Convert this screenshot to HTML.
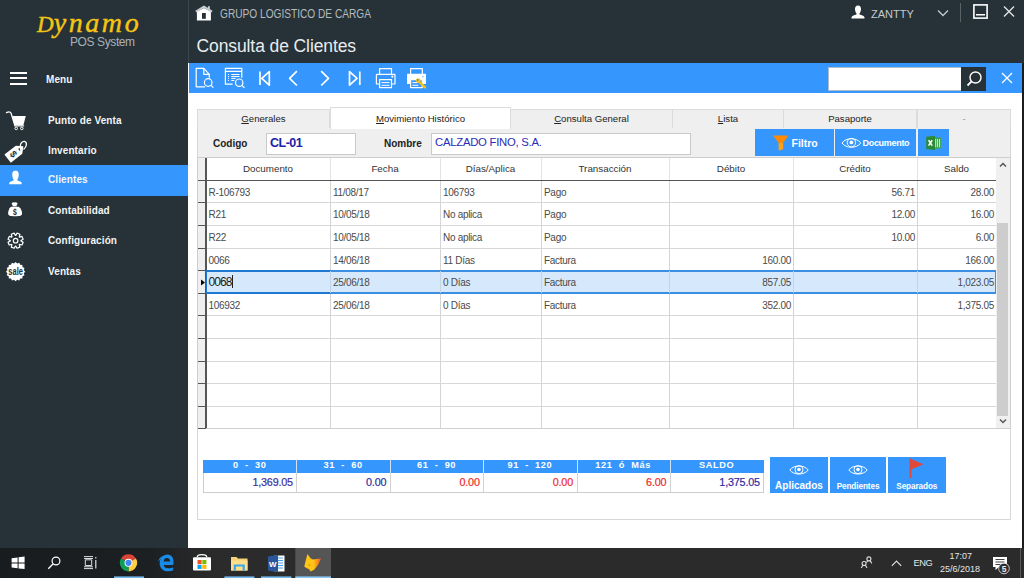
<!DOCTYPE html>
<html><head><meta charset="utf-8">
<style>
*{margin:0;padding:0;box-sizing:border-box}
html,body{width:1024px;height:578px;overflow:hidden;background:#fff;font-family:"Liberation Sans",sans-serif}
.a{position:absolute}
#side{left:0;top:0;width:188px;height:548px;background:#263238}
#hdr{left:188px;top:0;width:836px;height:63px;background:#263238;border-left:1px solid #3d464c}
#rb{left:1022px;top:0;width:2px;height:548px;background:linear-gradient(180deg,#263238 0,#263238 63px,#1a1d1f 63px)}
#tb{left:189px;top:63px;width:833px;height:30px;background:#3597fd}
.mi{color:#f2f4f5;font-weight:bold;font-size:10px;line-height:12px;left:48px;white-space:nowrap;letter-spacing:0.1px}
.t{white-space:nowrap}
#task{left:0;top:548px;width:1024px;height:30px;background:linear-gradient(90deg,#181c1f 0,#1c2023 150px,#2b2b2b 215px,#2b2b2b 100%)}
.tab{top:109px;height:20px;background:#efefef;border:1px solid #dcdcdc;border-bottom:none;font-size:9.6px;line-height:18px;text-align:center;color:#222;white-space:nowrap}
.act{top:107px;height:22px;background:#fff;line-height:21px;z-index:2}
.lbl{font-size:10px;font-weight:bold;color:#222;line-height:12px}
.btn{top:129px;height:27px;background:#3597fd}
.hd{font-size:9.8px;line-height:12px;text-align:center;color:#333;white-space:nowrap}
.cd{font-size:10px;line-height:12px;color:#4a4a4a;white-space:nowrap;margin-top:1.5px;letter-spacing:-0.3px}
.sh{top:459px;height:13px;font-size:9.2px;line-height:13px;font-weight:bold;color:#fff;text-align:center;letter-spacing:0.6px;white-space:nowrap;-webkit-text-stroke:0px}
.sv{top:475px;font-size:10.8px;line-height:14px;text-align:right;white-space:nowrap;-webkit-text-stroke:0.2px;letter-spacing:-0.2px}
</style></head><body>
<div class="a" id="side"></div>
<div class="a" id="hdr"></div>
<div class="a" id="rb"></div>
<div class="a" id="tb"></div>

<!-- logo -->
<svg class="a" style="left:0;top:0" width="188" height="60" viewBox="0 0 188 60"><text x="37" y="31.8" font-family="Liberation Serif" font-style="italic" fill="#f4c414" stroke="#f4c414" stroke-width="0.45"><tspan font-size="23">D</tspan><tspan font-size="28" letter-spacing="2.6">ynamo</tspan></text></svg>
<div class="a t" style="left:70px;top:35px;font-size:12px;color:#aab1b6;letter-spacing:-0.4px">POS System</div>

<!-- menu -->
<div class="a" style="left:10px;top:72px;width:17px;height:2px;background:#fff"></div>
<div class="a" style="left:10px;top:77px;width:17px;height:2px;background:#fff"></div>
<div class="a" style="left:10px;top:83px;width:17px;height:2px;background:#fff"></div>
<div class="a mi" style="left:46px;top:74px">Menu</div>

<div class="a" style="left:0;top:165px;width:188px;height:31px;background:#3597fd"></div>
<!-- sideicons -->
<svg class="a" style="left:0;top:100px" width="40" height="190" viewBox="0 100 40 190">
 <path d="M6.5 112.6 C8 111.8 10.2 111.6 11 113 L15 125.8 L23.6 125.8" stroke="#fff" stroke-width="1.3" fill="none" stroke-linecap="round"/>
 <path d="M12.2 116 L25.8 116 L23.4 125.3 L14.6 125.3Z" fill="#fff"/>
 <circle cx="16.2" cy="128.4" r="1.3" stroke="#fff" stroke-width="1" fill="none"/>
 <circle cx="21.8" cy="128.4" r="1.3" stroke="#fff" stroke-width="1" fill="none"/>
 <g transform="rotate(-38 15.5 152.5)">
  <path d="M5.5 147.3 L20 147.3 L25.5 152.5 L20 157.7 L5.5 157.7Z" fill="#fff"/>
  <circle cx="21" cy="152.5" r="1.3" fill="#263238"/>
  <text x="13" y="155.8" font-family="Liberation Sans" font-weight="bold" font-size="9.5" fill="#263238" text-anchor="middle" transform="rotate(90 13 152.5)">$</text>
 </g>
 <path d="M20.8 150.2 C18.8 145.5 21.5 141 24.3 141.3 C27.3 141.7 27.2 146.5 23.5 149.5" stroke="#fff" stroke-width="1.3" fill="none"/>
 <path d="M15.6 170.8 C18.3 170.8 18.9 172.8 18.7 175.5 C18.5 177.8 17.8 179 17.3 179.6 L17.4 180.6 C19.5 181.2 21.3 181.8 21.7 183 L21.7 184.2 L9.3 184.2 L9.3 183 C9.7 181.8 11.5 181.2 13.6 180.6 L13.7 179.6 C13.2 179 12.5 177.8 12.3 175.5 C12.1 172.8 12.7 170.8 15.6 170.8Z" fill="#fff"/>
 <path d="M11.6 203.4 Q12.8 201.9 14.6 202.4 Q16.4 201.9 17.6 203.4 L16.4 206.1 L12.8 206.1Z" fill="#fff"/>
 <path d="M10.6 207.1 C12 206.4 17.6 206.4 19 207.1 C21 208.5 22.1 211.4 22.1 213.5 C22.1 215.7 20.1 216.2 15.1 216.2 C10.1 216.2 8.1 215.7 8.1 213.5 C8.1 211.4 9.1 208.5 10.6 207.1Z" fill="#fff"/>
 <text x="14.9" y="215.2" font-family="Liberation Sans" font-weight="bold" font-size="8.6" fill="#263238" text-anchor="middle" transform="translate(14.9 0) scale(0.8 1) translate(-14.9 0)">$</text>
 <path d="M20.90 240.87 L23.16 242.17 L21.99 245.00 L19.47 244.32 L19.22 244.57 L19.90 247.09 L17.07 248.26 L15.77 246.00 L15.43 246.00 L14.13 248.26 L11.30 247.09 L11.98 244.57 L11.73 244.32 L9.21 245.00 L8.04 242.17 L10.30 240.87 L10.30 240.53 L8.04 239.23 L9.21 236.40 L11.73 237.08 L11.98 236.83 L11.30 234.31 L14.13 233.14 L15.43 235.40 L15.77 235.40 L17.07 233.14 L19.90 234.31 L19.22 236.83 L19.47 237.08 L21.99 236.40 L23.16 239.23 L20.90 240.53Z" stroke="#fff" stroke-width="1.2" fill="none" stroke-linejoin="round"/>
 <circle cx="15.6" cy="240.7" r="2.3" stroke="#fff" stroke-width="1.2" fill="none"/>
 <path d="M25.20 271.70 L23.74 273.32 L24.47 275.37 L22.50 276.31 L22.39 278.49 L20.21 278.60 L19.27 280.57 L17.22 279.84 L15.60 281.30 L13.98 279.84 L11.93 280.57 L10.99 278.60 L8.81 278.49 L8.70 276.31 L6.73 275.37 L7.46 273.32 L6.00 271.70 L7.46 270.08 L6.73 268.03 L8.70 267.09 L8.81 264.91 L10.99 264.80 L11.93 262.83 L13.98 263.56 L15.60 262.10 L17.22 263.56 L19.27 262.83 L20.21 264.80 L22.39 264.91 L22.50 267.09 L24.47 268.03 L23.74 270.08Z" fill="#fff"/>
 <text x="15.6" y="275.2" font-family="Liberation Sans" font-weight="bold" font-size="10" fill="#263238" text-anchor="middle" textLength="14.5" lengthAdjust="spacingAndGlyphs">sale</text>
</svg>
<!-- /sideicons -->
<div class="a mi" style="top:114.5px">Punto de Venta</div>
<div class="a mi" style="top:144.5px">Inventario</div>
<div class="a mi" style="top:174px">Clientes</div>
<div class="a mi" style="top:204.5px">Contabilidad</div>
<div class="a mi" style="top:235px">Configuración</div>
<div class="a mi" style="top:266px">Ventas</div>

<!-- header -->
<div class="a t" style="left:220px;top:7px;font-size:12px;color:#b4babe;transform:scaleX(0.845);transform-origin:0 0">GRUPO LOGISTICO DE CARGA</div>
<div class="a t" style="left:196.5px;top:36px;font-size:17.5px;color:#e9ecee;letter-spacing:-0.1px">Consulta de Clientes</div>
<div class="a t" style="left:871px;top:8px;font-size:11px;color:#c5cacd">ZANTTY</div>
<!-- house icon -->
<svg class="a" style="left:190px;top:2px" width="30" height="22" viewBox="190 2 30 22"><path d="M196.9 11.6 L203.9 8 L210.9 11.6 L210.9 20.6 L196.9 20.6Z" fill="#fff"/><path d="M195.8 11.6 L203.9 6.6 L212.1 11.6" stroke="#c9cdd0" stroke-width="1.9" fill="none"/><rect x="207.9" y="6.2" width="1.9" height="3.6" fill="#c9cdd0"/><rect x="202" y="13" width="3.8" height="5.8" fill="#263238"/></svg>
<!-- user icon -->
<svg class="a" style="left:851px;top:5px" width="14" height="14" viewBox="0 0 14 14"><path d="M7 0.5 C9.2 0.5 10.2 2.2 10 4.5 C9.8 6.8 8.8 8.2 8.4 8.6 L8.6 9.6 C10.5 10.1 13 10.8 13.5 12.2 L13.5 13.5 L0.5 13.5 L0.5 12.2 C1 10.8 3.5 10.1 5.4 9.6 L5.6 8.6 C5.2 8.2 4.2 6.8 4 4.5 C3.8 2.2 4.8 0.5 7 0.5Z" fill="#fff"/></svg>
<svg class="a" style="left:937px;top:9px" width="12" height="8" viewBox="0 0 12 8"><path d="M1 1.5 L6 6.5 L11 1.5" stroke="#c5cacd" stroke-width="1.3" fill="none"/></svg>
<div class="a" style="left:960px;top:3px;width:1px;height:19px;background:#59636a"></div>
<svg class="a" style="left:973px;top:4px" width="15" height="15" viewBox="0 0 15 15"><rect x="0.9" y="0.9" width="13.2" height="13.2" stroke="#fff" stroke-width="1.6" fill="none"/><rect x="3" y="10" width="9" height="1.5" fill="#fff"/></svg>
<svg class="a" style="left:1003px;top:6px" width="12" height="11" viewBox="0 0 12 11"><path d="M1 0.5 L11 10.5 M11 0.5 L1 10.5" stroke="#dfe3e5" stroke-width="1.4"/></svg>


<!-- toolbar icons -->
<svg class="a" style="left:189px;top:63px" width="250" height="30" viewBox="0 0 250 30" fill="none" stroke="#fff" stroke-width="1.2" stroke-linejoin="round">
 <path d="M16.2 23.8 L7.2 23.8 L7.2 5.4 L14.8 5.4 L20.3 11.3 L20.3 14.8 M14.8 5.4 L14.8 11.3 L20.3 11.3"/>
 <circle cx="19.2" cy="19.5" r="3.8"/><path d="M21.9 22.2 L24.3 24.6"/>
 <path d="M43.6 21.2 L36.4 21.2 L36.4 5.4 L52.8 5.4 L52.8 14.8 M36.4 8.3 L52.8 8.3"/>
 <path d="M39 11.5 h0.9 M39 13.5 h0.9 M39 15.4 h0.9 M39 17.5 h0.9 M42.3 11.5 h8.2 M42.3 13.5 h8.2 M42.3 15.4 h4.4 M42.3 17.5 h3" stroke-width="1"/>
 <circle cx="50.2" cy="19.7" r="3.7" fill="#3597fd"/><path d="M52.9 22.4 L55.4 24.8"/>
 <path d="M71 8.6 L71 22.1 M80.3 8.6 L72.8 15.35 L80.3 22.1 Z" stroke-width="1.7"/>
 <path d="M107.9 8.2 L100.6 15.35 L107.9 22.5" stroke-width="1.7"/>
 <path d="M132.2 8.2 L139.5 15.35 L132.2 22.5" stroke-width="1.7"/>
 <path d="M160.5 8.6 L168 15.35 L160.5 22.1 Z M170.8 8.6 L170.8 22.1" stroke-width="1.7"/>
 <path d="M190.6 11.3 L190.6 5.6 L202.5 5.6 L202.5 11.3"/>
 <path d="M190.4 21 L188 21 Q187.4 21 187.4 20.4 L187.4 12 Q187.4 11.4 188 11.4 L205.4 11.4 Q206 11.4 206 12 L206 20.4 Q206 21 205.4 21 L202.8 21"/>
 <rect x="190.6" y="16.6" width="11.9" height="8" fill="#3597fd"/>
 <path d="M192.5 19.6 h8 M192.5 22.3 h8" stroke-width="1"/>
 <circle cx="203.3" cy="13.6" r="0.5" fill="#fff"/>
 <path d="M221.6 11 L221.6 5.6 L233.3 5.6 L233.3 11"/>
 <rect x="218" y="10.8" width="19" height="10.2" rx="0.6" fill="#fff" stroke="none"/>
 <rect x="221.6" y="16.6" width="11.7" height="8" fill="#3597fd"/>
 <path d="M223.4 19.6 h6 M223.4 22.3 h6" stroke-width="1"/>
 <circle cx="234" cy="13.6" r="0.6" fill="#3597fd" stroke="none"/>
 <path d="M230 18.5 L236 24.3" stroke="#f2c21b" stroke-width="2.4" stroke-linecap="round"/>
 <circle cx="229.2" cy="17.6" r="2.4" fill="#f2c21b" stroke="none"/>
 <circle cx="228.7" cy="17" r="0.9" fill="#3597fd" stroke="none"/>
</svg>
<!-- search -->
<div class="a" style="left:828px;top:67px;width:134px;height:24px;background:#fff;border:1px solid #aebccb"></div>
<div class="a" style="left:961px;top:67px;width:25px;height:24px;background:#263238"></div>
<svg class="a" style="left:964px;top:69px" width="20" height="20" viewBox="0 0 20 20" fill="none" stroke="#fff" stroke-width="1.4"><circle cx="11.5" cy="8.5" r="5.5"/><path d="M7.6 12.4 L3.5 16.5" stroke-width="1.8"/></svg>
<svg class="a" style="left:1001px;top:72px" width="12" height="12" viewBox="0 0 12 12"><path d="M1 1 L11 11 M11 1 L1 11" stroke="#fff" stroke-width="1.3"/></svg>

<!-- outer panel -->
<div class="a" style="left:197px;top:109px;width:814px;height:411px;border:1px solid #d8d8d8;border-top:none"></div>
<!-- tabs -->
<div class="a tab" style="left:197px;width:133px"><u>G</u>enerales</div>
<div class="a tab act" style="left:330px;width:181px"><u>M</u>ovimiento Histórico</div>
<div class="a tab" style="left:510px;width:163px"><u>C</u>onsulta General</div>
<div class="a tab" style="left:672px;width:112px"><u>L</u>ista</div>
<div class="a tab" style="left:783px;width:134px">Pasaporte</div>
<div class="a tab" style="left:917px;width:94px;color:#999">-</div>
<!-- form row -->
<div class="a" style="left:197px;top:128px;width:814px;height:30px;background:#efefef;border-left:1px solid #d8d8d8;border-right:1px solid #d8d8d8"></div>
<div class="a t lbl" style="left:213px;top:138px">Codigo</div>
<div class="a" style="left:266px;top:133px;width:90px;height:22px;background:#fff;border:1px solid #c9c9c9"></div>
<div class="a t" style="left:270px;top:134px;font-size:12.5px;line-height:18px;font-weight:bold;color:#2020a8;letter-spacing:-0.5px">CL-01</div>
<div class="a t lbl" style="left:384px;top:138px">Nombre</div>
<div class="a" style="left:431px;top:133px;width:260px;height:22px;background:#fff;border:1px solid #c9c9c9"></div>
<div class="a t" style="left:435px;top:132.5px;font-size:11.3px;line-height:18px;color:#2b2bbb;letter-spacing:-0.25px">CALZADO FINO, S.A.</div>
<div class="a btn" style="left:755px;width:79px"></div>
<div class="a btn" style="left:835px;width:81px"></div>
<div class="a btn" style="left:918px;width:31px"></div>
<svg class="a" style="left:772px;top:134px" width="18" height="18" viewBox="0 0 18 18"><path d="M1 1.5 L16.4 1.5 L11.2 8.7 L6.6 8.7Z" fill="#ff8a00"/><path d="M6.6 8.7 L11.2 8.7 L11.2 15.3 L6.6 16.6Z" fill="#ffa010"/></svg>
<div class="a t" style="left:791.5px;top:135.5px;font-size:10.5px;line-height:14px;font-weight:bold;color:#fff">Filtro</div>
<svg class="a" style="left:841px;top:136.5px" width="21" height="12" viewBox="0 0 21 12" fill="none" stroke="#fff" stroke-width="1"><path d="M1 6 C5 0.3 15.5 0.3 19.8 6 C15.5 11.7 5 11.7 1 6Z"/><circle cx="10.4" cy="5.6" r="4.2"/><circle cx="10.4" cy="5.4" r="1.9" fill="#fff" stroke="none"/></svg>
<div class="a t" style="left:862.5px;top:137px;font-size:9px;line-height:12px;font-weight:bold;color:#fff;letter-spacing:-0.3px">Documento</div>
<svg class="a" style="left:925px;top:135px" width="17" height="16" viewBox="0 0 17 16"><rect x="9.5" y="2.6" width="6.4" height="10.9" fill="#3aa14a"/><path d="M10.3 4 v8.3 M12.4 4 v8.3 M14.5 4 v8.3" stroke="#c8e8cb" stroke-width="1.1"/><path d="M1.2 1.8 L10 0.8 L10 15 L1.2 14Z" fill="#2a8a38"/><path d="M3.6 5.2 L7.2 10.6 M7.2 5.2 L3.6 10.6" stroke="#fff" stroke-width="1.6"/></svg>

<!-- grid -->
<div class="a" style="left:197px;top:157px;width:814px;height:272px;background:#fff;border:1px solid #cfcfcf"></div>
<div class="a" style="left:198px;top:158px;width:7px;height:270px;background:#efefef"></div>
<div class="a" style="left:205px;top:158px;width:2px;height:270px;background:#555"></div>
<div class="a" style="left:330px;top:158px;width:1px;height:22px;background:#e3e3e3"></div>
<div class="a" style="left:330px;top:181px;width:1px;height:247px;background:#d4d4d4"></div>
<div class="a" style="left:440px;top:158px;width:1px;height:22px;background:#e3e3e3"></div>
<div class="a" style="left:440px;top:181px;width:1px;height:247px;background:#d4d4d4"></div>
<div class="a" style="left:541px;top:158px;width:1px;height:22px;background:#e3e3e3"></div>
<div class="a" style="left:541px;top:181px;width:1px;height:247px;background:#d4d4d4"></div>
<div class="a" style="left:669px;top:158px;width:1px;height:22px;background:#e3e3e3"></div>
<div class="a" style="left:669px;top:181px;width:1px;height:247px;background:#d4d4d4"></div>
<div class="a" style="left:793px;top:158px;width:1px;height:22px;background:#e3e3e3"></div>
<div class="a" style="left:793px;top:181px;width:1px;height:247px;background:#d4d4d4"></div>
<div class="a" style="left:917px;top:158px;width:1px;height:22px;background:#e3e3e3"></div>
<div class="a" style="left:917px;top:181px;width:1px;height:247px;background:#d4d4d4"></div>
<div class="a" style="left:198px;top:180px;width:798px;height:1px;background:#555"></div>
<div class="a" style="left:207px;top:202px;width:789px;height:1px;background:#d8d8d8"></div>
<div class="a" style="left:207px;top:225px;width:789px;height:1px;background:#d8d8d8"></div>
<div class="a" style="left:207px;top:248px;width:789px;height:1px;background:#d8d8d8"></div>
<div class="a" style="left:207px;top:270px;width:789px;height:1px;background:#d8d8d8"></div>
<div class="a" style="left:207px;top:293px;width:789px;height:1px;background:#d8d8d8"></div>
<div class="a" style="left:207px;top:315px;width:789px;height:1px;background:#d8d8d8"></div>
<div class="a" style="left:207px;top:338px;width:789px;height:1px;background:#d8d8d8"></div>
<div class="a" style="left:207px;top:361px;width:789px;height:1px;background:#d8d8d8"></div>
<div class="a" style="left:207px;top:383px;width:789px;height:1px;background:#d8d8d8"></div>
<div class="a" style="left:207px;top:406px;width:789px;height:1px;background:#d8d8d8"></div>
<div class="a" style="left:198px;top:202px;width:8px;height:1px;background:#555"></div>
<div class="a" style="left:198px;top:225px;width:8px;height:1px;background:#555"></div>
<div class="a" style="left:198px;top:248px;width:8px;height:1px;background:#555"></div>
<div class="a" style="left:198px;top:270px;width:8px;height:1px;background:#555"></div>
<div class="a" style="left:198px;top:293px;width:8px;height:1px;background:#555"></div>
<div class="a" style="left:198px;top:315px;width:8px;height:1px;background:#555"></div>
<div class="a" style="left:198px;top:338px;width:8px;height:1px;background:#555"></div>
<div class="a" style="left:198px;top:361px;width:8px;height:1px;background:#555"></div>
<div class="a" style="left:198px;top:383px;width:8px;height:1px;background:#555"></div>
<div class="a" style="left:198px;top:406px;width:8px;height:1px;background:#555"></div>
<div class="a" style="left:198px;top:428px;width:8px;height:1px;background:#555"></div>
<div class="a" style="left:206px;top:270px;width:790px;height:24px;background:#d6e9fc;border:2px solid #3a8fe2;border-width:2px 1px 2px 0"></div>
<div class="a" style="left:206px;top:270px;width:125px;height:24px;border:1px solid #1f78d4;border-width:2px 1px 2px 1px"></div>
<div class="a" style="left:330px;top:271px;width:1px;height:22px;background:#c4d4e4"></div>
<div class="a" style="left:440px;top:271px;width:1px;height:22px;background:#c4d4e4"></div>
<div class="a" style="left:541px;top:271px;width:1px;height:22px;background:#c4d4e4"></div>
<div class="a" style="left:669px;top:271px;width:1px;height:22px;background:#c4d4e4"></div>
<div class="a" style="left:793px;top:271px;width:1px;height:22px;background:#c4d4e4"></div>
<div class="a" style="left:917px;top:271px;width:1px;height:22px;background:#c4d4e4"></div>
<svg class="a" style="left:200px;top:279px" width="6" height="7" viewBox="0 0 6 7"><path d="M1 0.5 L5 3.5 L1 6.5Z" fill="#000"/></svg>
<div class="a hd" style="left:206px;width:124px;top:163px">Documento</div>
<div class="a hd" style="left:330px;width:110px;top:163px">Fecha</div>
<div class="a hd" style="left:440px;width:101px;top:163px">Días/Aplica</div>
<div class="a hd" style="left:541px;width:128px;top:163px">Transacción</div>
<div class="a hd" style="left:669px;width:124px;top:163px">Débito</div>
<div class="a hd" style="left:793px;width:124px;top:163px">Crédito</div>
<div class="a hd" style="left:917px;width:79px;top:163px">Saldo</div>
<div class="a cd" style="left:208.5px;top:185px">R-106793</div>
<div class="a cd" style="left:333px;top:185px">11/08/17</div>
<div class="a cd" style="left:443px;top:185px">106793</div>
<div class="a cd" style="left:544px;top:185px">Pago</div>
<div class="a cd" style="left:793px;width:122px;top:185px;text-align:right">56.71</div>
<div class="a cd" style="left:917px;width:77px;top:185px;text-align:right">28.00</div>
<div class="a cd" style="left:208.5px;top:207px">R21</div>
<div class="a cd" style="left:333px;top:207px">10/05/18</div>
<div class="a cd" style="left:443px;top:207px">No aplica</div>
<div class="a cd" style="left:544px;top:207px">Pago</div>
<div class="a cd" style="left:793px;width:122px;top:207px;text-align:right">12.00</div>
<div class="a cd" style="left:917px;width:77px;top:207px;text-align:right">16.00</div>
<div class="a cd" style="left:208.5px;top:230px">R22</div>
<div class="a cd" style="left:333px;top:230px">10/05/18</div>
<div class="a cd" style="left:443px;top:230px">No aplica</div>
<div class="a cd" style="left:544px;top:230px">Pago</div>
<div class="a cd" style="left:793px;width:122px;top:230px;text-align:right">10.00</div>
<div class="a cd" style="left:917px;width:77px;top:230px;text-align:right">6.00</div>
<div class="a cd" style="left:208.5px;top:253px">0066</div>
<div class="a cd" style="left:333px;top:253px">14/06/18</div>
<div class="a cd" style="left:443px;top:253px">11 Días</div>
<div class="a cd" style="left:544px;top:253px">Factura</div>
<div class="a cd" style="left:669px;width:122px;top:253px;text-align:right">160.00</div>
<div class="a cd" style="left:917px;width:77px;top:253px;text-align:right">166.00</div>
<div class="a t" style="left:208.5px;top:274.7px;font-size:12px;line-height:14px;color:#1a1a1a;letter-spacing:-0.9px">0068</div>
<div class="a cd" style="left:333px;top:275px">25/06/18</div>
<div class="a cd" style="left:443px;top:275px">0 Días</div>
<div class="a cd" style="left:544px;top:275px">Factura</div>
<div class="a cd" style="left:669px;width:122px;top:275px;text-align:right">857.05</div>
<div class="a cd" style="left:917px;width:77px;top:275px;text-align:right">1,023.05</div>
<div class="a cd" style="left:208.5px;top:298px">106932</div>
<div class="a cd" style="left:333px;top:298px">25/06/18</div>
<div class="a cd" style="left:443px;top:298px">0 Días</div>
<div class="a cd" style="left:544px;top:298px">Factura</div>
<div class="a cd" style="left:669px;width:122px;top:298px;text-align:right">352.00</div>
<div class="a cd" style="left:917px;width:77px;top:298px;text-align:right">1,375.05</div>
<div class="a" style="left:232px;top:275px;width:1px;height:13px;background:#222"></div>
<div class="a" style="left:996px;top:158px;width:14px;height:270px;background:#f0f0f0"></div>
<div class="a" style="left:997px;top:223px;width:11px;height:193px;background:#cdcdcd"></div>
<svg class="a" style="left:998px;top:161px" width="10" height="8" viewBox="0 0 10 8"><path d="M2 5.5 L5 2.5 L8 5.5" stroke="#555" stroke-width="1.5" fill="none"/></svg>
<svg class="a" style="left:998px;top:417px" width="10" height="8" viewBox="0 0 10 8"><path d="M2 2.5 L5 5.5 L8 2.5" stroke="#555" stroke-width="1.5" fill="none"/></svg>
<!-- /grid -->
<!-- sum -->
<div class="a" style="left:203px;top:460px;width:561px;height:13px;background:#3597fd"></div>
<div class="a" style="left:203px;top:473px;width:561px;height:20px;background:#fff;border:1px solid #cdcdcd;border-top:none"></div>
<div class="a sh" style="left:203px;width:93.39999999999998px">0&nbsp;&nbsp;-&nbsp;&nbsp;30</div>
<div class="a sv" style="left:203px;width:89.89999999999998px;color:#3b2f9e">1,369.05</div>
<div class="a" style="left:296.4px;top:460px;width:1px;height:13px;background:#cfe4fb"></div>
<div class="a" style="left:296.4px;top:473px;width:1px;height:19px;background:#d2d2d2"></div>
<div class="a sh" style="left:296.4px;width:93.40000000000003px">31&nbsp;&nbsp;-&nbsp;&nbsp;60</div>
<div class="a sv" style="left:296.4px;width:89.90000000000003px;color:#2f2ba0">0.00</div>
<div class="a" style="left:389.8px;top:460px;width:1px;height:13px;background:#cfe4fb"></div>
<div class="a" style="left:389.8px;top:473px;width:1px;height:19px;background:#d2d2d2"></div>
<div class="a sh" style="left:389.8px;width:93.39999999999998px">61&nbsp;&nbsp;-&nbsp;&nbsp;90</div>
<div class="a sv" style="left:389.8px;width:89.89999999999998px;color:#ee2a2a">0.00</div>
<div class="a" style="left:483.2px;top:460px;width:1px;height:13px;background:#cfe4fb"></div>
<div class="a" style="left:483.2px;top:473px;width:1px;height:19px;background:#d2d2d2"></div>
<div class="a sh" style="left:483.2px;width:93.30000000000001px">91&nbsp;&nbsp;-&nbsp;&nbsp;120</div>
<div class="a sv" style="left:483.2px;width:89.80000000000001px;color:#ee2a2a">0.00</div>
<div class="a" style="left:576.5px;top:460px;width:1px;height:13px;background:#cfe4fb"></div>
<div class="a" style="left:576.5px;top:473px;width:1px;height:19px;background:#d2d2d2"></div>
<div class="a sh" style="left:576.5px;width:93.29999999999995px">121&nbsp;&nbsp;ó&nbsp;&nbsp;Más</div>
<div class="a sv" style="left:576.5px;width:89.79999999999995px;color:#ee2a2a">6.00</div>
<div class="a" style="left:669.8px;top:460px;width:1px;height:13px;background:#cfe4fb"></div>
<div class="a" style="left:669.8px;top:473px;width:1px;height:19px;background:#d2d2d2"></div>
<div class="a sh" style="left:669.8px;width:93.5px">SALDO</div>
<div class="a sv" style="left:669.8px;width:90.0px;color:#2f2ba0">1,375.05</div>
<div class="a" style="left:770px;top:457px;width:58px;height:36px;background:#3597fd"></div>
<div class="a" style="left:830px;top:457px;width:56px;height:36px;background:#3597fd"></div>
<div class="a" style="left:888px;top:457px;width:57.5px;height:36px;background:#3597fd"></div>
<svg class="a" style="left:789px;top:463.5px" width="20" height="12" viewBox="0 0 20 12" fill="none" stroke="#fff" stroke-width="1"><path d="M0.8 6 C5 0.6 15 0.6 19.2 6 C15 11.4 5 11.4 0.8 6Z"/><circle cx="10" cy="5.7" r="4"/><circle cx="10" cy="5.5" r="1.8" fill="#fff" stroke="none"/></svg>
<svg class="a" style="left:848px;top:463.5px" width="20" height="12" viewBox="0 0 20 12" fill="none" stroke="#fff" stroke-width="1"><path d="M0.8 6 C5 0.6 15 0.6 19.2 6 C15 11.4 5 11.4 0.8 6Z"/><circle cx="10" cy="5.7" r="4"/><circle cx="10" cy="5.5" r="1.8" fill="#fff" stroke="none"/></svg>
<svg class="a" style="left:909px;top:458px" width="16" height="21" viewBox="0 0 16 21"><path d="M1.5 0.5 L1.5 20" stroke="#e0483a" stroke-width="1.8"/><path d="M2 1 L14.5 6.3 L2 11.5Z" fill="#e0483a"/></svg>
<div class="a t" style="left:770px;top:480px;width:58px;text-align:center;font-size:10px;line-height:12px;font-weight:bold;color:#fff">Aplicados</div>
<div class="a t" style="left:830px;top:480.5px;width:56px;text-align:center;font-size:8.2px;line-height:12px;font-weight:bold;color:#fff;letter-spacing:-0.1px">Pendientes</div>
<div class="a t" style="left:888px;top:480.5px;width:57.5px;text-align:center;font-size:8.2px;line-height:12px;font-weight:bold;color:#fff;letter-spacing:-0.1px">Separados</div>
<!-- /sum -->
<!-- taskbar -->
<div class="a" id="task"></div>
<svg class="a" style="left:0;top:548px" width="1024" height="30" viewBox="0 548 1024 30">
 <path d="M11.6 558.3 L17.6 557.4 L17.6 562.4 L11.6 562.4Z M18.6 557.2 L24.6 556.4 L24.6 562.4 L18.6 562.4Z M11.6 563.4 L17.6 563.4 L17.6 568.3 L11.6 567.5Z M18.6 563.4 L24.6 563.4 L24.6 569 L18.6 568.4Z" fill="#fff"/>
 <circle cx="56" cy="561" r="3.9" stroke="#fff" stroke-width="1.2" fill="none"/>
 <path d="M53.2 563.8 L48.3 568.7" stroke="#fff" stroke-width="1.3"/>
 <path d="M84 558.5 L93 558.5 M84 566.8 L93 566.8 M85.3 559.8 L85.3 565.5 L91.7 565.5 L91.7 559.8Z M84 568.6 L93 568.6 M84 556.6 L93 556.6" stroke="#ddd" stroke-width="1" fill="none"/>
 <path d="M95.8 557 v1.6 M95.8 560 v8.6" stroke="#ddd" stroke-width="1.2"/>
 <path d="M128.5 562.8 L121.05 558.50 A8.6 8.6 0 0 1 135.95 558.50Z" fill="#db4437"/><path d="M128.5 562.8 L135.95 558.50 A8.6 8.6 0 0 1 128.50 571.40Z" fill="#ffcd40"/><path d="M128.5 562.8 L128.50 571.40 A8.6 8.6 0 0 1 121.05 558.50Z" fill="#0f9d58"/><circle cx="128.5" cy="562.8" r="4" fill="#fff"/><circle cx="128.5" cy="562.8" r="3.1" fill="#4285f4"/>
 <rect x="114" y="576.4" width="30" height="1.6" fill="#76b9ed"/>
 <path d="M173.3 565 L163.7 565 C164 567.2 165.8 568.3 168.3 568.3 C170.2 568.3 172 567.8 173.2 567.2 L173.2 570.3 C171.8 571 169.8 571.3 167.8 571.3 C163 571.3 159.7 568 159.7 563.2 C159.7 558.2 163.2 554.6 167.3 554.6 C171.3 554.6 173.5 557.5 173.5 561.8 Z M163.6 561.6 L170.2 561.6 C170.1 559.3 169 557.9 166.9 557.9 C164.9 557.9 163.8 559.4 163.6 561.6Z" fill="#1a8ae6"/>
 <path d="M158.2 561.6 C159 557.6 162.5 555.6 165.2 556.2 C162.5 557 160.5 558.8 158.2 561.6Z" fill="#1a8ae6"/>
 <path d="M197.2 557.3 C197.2 553.8 206.8 553.8 206.8 557.3" stroke="#fff" stroke-width="1.2" fill="none"/>
 <rect x="193" y="557.3" width="18" height="13.3" rx="1" fill="#fff"/>
 <rect x="197.5" y="560" width="4.1" height="4.1" fill="#f25022"/><rect x="202.3" y="560" width="4.1" height="4.1" fill="#7fba00"/>
 <rect x="197.5" y="564.8" width="4.1" height="4.1" fill="#00a4ef"/><rect x="202.3" y="564.8" width="4.1" height="4.1" fill="#ffb900"/>
 <path d="M231 557 L236.5 557 L238 558.6 L247.5 558.6 L247.5 570.5 L231 570.5Z" fill="#f3d27a"/>
 <path d="M231 560.5 L247.5 560.5 L247.5 570.5 L231 570.5Z" fill="#ffe08a"/>
 <path d="M234.8 570.5 L234.8 565.5 L243.7 565.5 L243.7 570.5" stroke="#3aa6ee" stroke-width="2.2" fill="none"/>
 <rect x="224.4" y="576.4" width="30" height="1.6" fill="#76b9ed"/>
 <path d="M274.5 555.5 L284.5 555.5 L284.5 571.5 L274.5 571.5Z" fill="#fff"/>
 <path d="M276 558 h7 M276 560.5 h7 M276 563 h7 M276 565.5 h7 M276 568 h7" stroke="#41a5ee" stroke-width="1"/>
 <path d="M268 556.6 L278 554.8 L278 572.2 L268 570.4Z" fill="#2b579a"/>
 <text x="272.9" y="566.6" font-family="Liberation Sans" font-weight="bold" font-size="8" fill="#fff" text-anchor="middle">W</text>
 <rect x="261" y="576.4" width="30.4" height="1.6" fill="#76b9ed"/>
 <rect x="295.3" y="548" width="35.7" height="30" fill="#555"/>
 <rect x="295.3" y="576.4" width="35.7" height="1.6" fill="#8cc8f5"/>
 <defs><linearGradient id="fx" x1="0" y1="0" x2="1" y2="0"><stop offset="0.55" stop-color="#ffc414"/><stop offset="1" stop-color="#f05a28"/></linearGradient></defs>
 <path d="M307.5 554 L310.5 558.2 L313 559.6 L316.5 559 L321 558.5 L318.3 564.5 L314.2 569.8 L310.5 571.6 L309.2 569.3 L306.3 568 L304.3 566.5 L305.3 562.3 L306.3 558.2Z" fill="url(#fx)"/>
 <path d="M308.6 565.3 l1.6 -0.6" stroke="#b07a10" stroke-width="0.9"/>
 <circle cx="864.1" cy="563.5" r="2" stroke="#ddd" stroke-width="1.1" fill="none"/>
 <path d="M862.8 565.3 L861.3 567.9 M865.4 565.3 L867 567.9" stroke="#ddd" stroke-width="1.1"/>
 <circle cx="868.9" cy="558.9" r="2" stroke="#ddd" stroke-width="1.1" fill="none"/>
 <path d="M867.6 560.7 L866.5 562.5 M870.2 560.7 L871.8 563.4" stroke="#ddd" stroke-width="1.1"/>
 <path d="M891.8 565.8 L896.5 561 L901.2 565.8" stroke="#ddd" stroke-width="1.2" fill="none"/>
 <path d="M993 557 L1007 557 L1007 567 L999 567 L995.5 570 L995.5 567 L993 567Z" fill="#fff"/>
 <path d="M995.5 559.5 h9 M995.5 562 h9 M995.5 564.5 h9" stroke="#2b2b2b" stroke-width="0.9"/>
 <circle cx="1004" cy="568.5" r="5.3" fill="#2b2b2b" stroke="#ddd" stroke-width="0.9"/>
 <text x="1004" y="571.7" font-family="Liberation Sans" font-weight="bold" font-size="8.5" fill="#eee" text-anchor="middle">5</text>
 <rect x="1020" y="548" width="1" height="30" fill="#5a5a5a"/>
</svg>
<div class="a t" style="left:913.5px;top:556.5px;font-size:9.3px;line-height:12px;color:#e6e6e6;letter-spacing:-0.5px">ENG</div>
<div class="a t" style="left:949.5px;top:550.5px;font-size:9px;line-height:11px;color:#e6e6e6">17:07</div>
<div class="a t" style="left:940px;top:564px;font-size:9px;line-height:11px;color:#e6e6e6">25/6/2018</div>
<!-- /taskbar -->
</body></html>
